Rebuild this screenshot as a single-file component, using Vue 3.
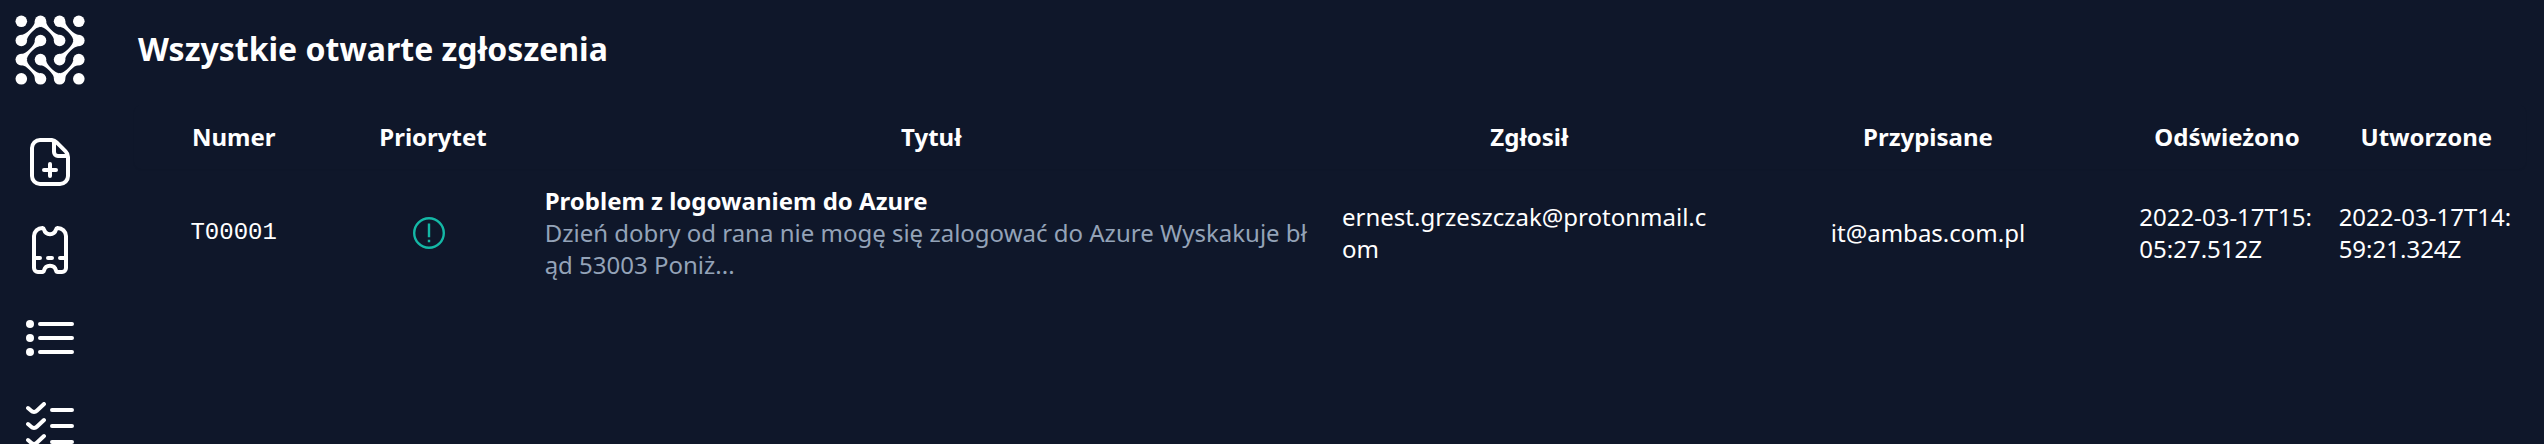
<script setup>
const columns = [
  { key: 'number', label: 'Numer', size: 'single' },
  { key: 'priority', label: 'Priorytet', size: 'single' },
  { key: 'title', label: 'Tytuł', size: 'wide' },
  { key: 'reporter', label: 'Zgłosił', size: 'double' },
  { key: 'assignee', label: 'Przypisane', size: 'double' },
  { key: 'updated', label: 'Odświeżono', size: 'single' },
  { key: 'created', label: 'Utworzone', size: 'single' }
]

const tickets = [
  {
    number: 'T00001',
    title: 'Problem z logowaniem do Azure',
    excerpt: 'Dzień dobry od rana nie mogę się zalogować do Azure Wyskakuje błąd 53003 Poniż...',
    reporter: 'ernest.grzeszczak@protonmail.com',
    assignee: 'it@ambas.com.pl',
    updated: '2022-03-17T15:05:27.512Z',
    created: '2022-03-17T14:59:21.324Z'
  }
]

// Logo: a 4x4 grid of dots, some neighbours joined by tapered diagonal links.
const steps = [6.3, 25.5, 44.6, 63.8]
const dots = steps.flatMap((y) => steps.map((x) => ({ x, y })))
const links = [
  [0, 1, 1, 0], [1, 0, 2, 1],
  [2, 0, 3, 1], [3, 1, 2, 2],
  [1, 1, 0, 2], [0, 2, 1, 3],
  [1, 2, 2, 3], [2, 3, 3, 2]
]

function linkPath([c1, r1, c2, r2]) {
  const x = steps[c1]
  const y = steps[r1]
  const dx = steps[c2] - x
  const dy = steps[r2] - y
  const length = Math.hypot(dx, dy)
  const ux = dx / length
  const uy = dy / length
  const at = (along, side) =>
    `${(x + ux * along - uy * side).toFixed(2)} ${(y + uy * along + ux * side).toFixed(2)}`
  const edge = 4.6
  const flare = 3.5
  const bend = 7
  const half = 1.5
  const mid = length / 2
  return [
    `M${at(edge, flare)}`,
    `Q${at(bend, half)} ${at(mid, half)}`,
    `Q${at(length - bend, half)} ${at(length - edge, flare)}`,
    `L${at(length - edge, -flare)}`,
    `Q${at(length - bend, -half)} ${at(mid, -half)}`,
    `Q${at(bend, -half)} ${at(edge, -flare)}Z`
  ].join('')
}

const linkPaths = links.map(linkPath)
</script>

<template>
  <div class="app">
    <nav class="sidebar">
      <a href="#" class="logo" aria-label="Strona główna">
        <svg viewBox="0 0 70 70" aria-hidden="true">
          <circle v-for="(d, i) in dots" :key="i" :cx="d.x" :cy="d.y" r="5.8" />
          <path v-for="p in linkPaths" :key="p" :d="p" />
        </svg>
      </a>
      <a href="#" class="item" aria-label="Nowe zgłoszenie">
        <svg viewBox="0 0 24 24" aria-hidden="true">
          <path d="M12 1H7A4 4 0 0 0 3 5V19A4 4 0 0 0 7 23H17A4 4 0 0 0 21 19V9.5A4 4 0 0 0 19.8 6.7L15.3 2.2A4 4 0 0 0 12 1ZM14 1.5V7A2 2 0 0 0 16 9H20.6M12 13V19M9 16H15" />
        </svg>
      </a>
      <a href="#" class="item" aria-label="Zgłoszenia">
        <svg viewBox="0 0 24 24" aria-hidden="true">
          <path d="M8.2 1A4.2 4.2 0 0 0 4 5V21A2 2 0 0 0 6 23H8A1 1 0 0 0 9 22.2A3.1 3.1 0 0 1 15 22.2A1 1 0 0 0 16 23H18A2 2 0 0 0 20 21V5A4.2 4.2 0 0 0 15.8 1A1 1 0 0 0 15 1.8A3.1 3.1 0 0 1 9 1.8A1 1 0 0 0 8.2 1ZM4 16H7M11 16H13M17 16H20" />
        </svg>
      </a>
      <a href="#" class="item" aria-label="Lista">
        <svg viewBox="0 0 24 24" aria-hidden="true">
          <path d="M7 5H23M7 12H23M7 19H23" />
          <circle cx="2" cy="5" r="2" />
          <circle cx="2" cy="12" r="2" />
          <circle cx="2" cy="19" r="2" />
        </svg>
      </a>
      <a href="#" class="item" aria-label="Zadania">
        <svg viewBox="0 0 24 24" aria-hidden="true">
          <path d="M13 4H23M13 12H23M13 20H23M1 3 2.6 4.4A2 2 0 0 0 5.4 4.4L9 1M1 11 2.6 12.4A2 2 0 0 0 5.4 12.4L9 9M1 19 2.6 20.4A2 2 0 0 0 5.4 20.4L9 17" />
        </svg>
      </a>
    </nav>

    <main class="content">
      <h1>Wszystkie otwarte zgłoszenia</h1>
      <table>
        <colgroup>
          <col v-for="c in columns" :key="c.key" :class="c.size" />
        </colgroup>
        <thead>
          <tr>
            <th v-for="c in columns" :key="c.key" scope="col">{{ c.label }}</th>
          </tr>
        </thead>
        <tbody>
          <tr v-for="t in tickets" :key="t.number">
            <td class="number">{{ t.number }}</td>
            <td class="priority">
              <svg viewBox="0 0 32 32" role="img" aria-label="Priorytet niski">
                <circle cx="16" cy="16" r="14.8" />
                <path d="M16 6.5V20.3M16 22.7V25.2" />
              </svg>
            </td>
            <td>
              <strong>{{ t.title }}</strong>
              <p>{{ t.excerpt }}</p>
            </td>
            <td>{{ t.reporter }}</td>
            <td class="assignee">{{ t.assignee }}</td>
            <td>{{ t.updated }}</td>
            <td>{{ t.created }}</td>
          </tr>
        </tbody>
      </table>
    </main>
  </div>
</template>

<style>
body {
  margin: 0;
  background: #0f172a;
}
</style>

<style scoped>
.app {
  display: flex;
  height: 100vh;
  overflow: hidden;
  background: #0f172a;
  color: #fff;
  font-family: "Noto Sans", sans-serif;
  font-size: 24px;
  line-height: 32px;
}

.sidebar {
  display: flex;
  flex: none;
  flex-direction: column;
  align-items: center;
  gap: 40px;
  width: 100px;
  padding-top: 15px;
  box-sizing: border-box;
}

.logo {
  flex: none;
  width: 70px;
  height: 70px;
  margin-bottom: 13px;
}

.item {
  flex: none;
  width: 48px;
  height: 48px;
}

svg {
  display: block;
  width: 100%;
  height: 100%;
}

.sidebar svg {
  fill: #fff;
}

.item path {
  fill: none;
  stroke: #fff;
  stroke-width: 2;
  stroke-linecap: round;
  stroke-linejoin: round;
}

.content {
  flex: 1;
  min-width: 0;
  padding: 25px 18px 0 34px;
}

h1 {
  margin: 0 4px 32px;
  font-size: 32px;
  line-height: 48px;
  font-weight: 700;
}

table {
  width: 100%;
  table-layout: fixed;
  border-collapse: collapse;
}

thead tr {
  border-radius: 8px;
  box-shadow: 0 1px 2px rgba(0, 0, 0, 0.05);
}

.single {
  width: 8.3333%;
}

.double {
  width: 16.6667%;
}

.wide {
  width: 33.3333%;
}

th {
  padding: 16px 12px;
  font-weight: 700;
  text-align: center;
}

td {
  padding: 16px 12px 0;
  vertical-align: middle;
  word-break: break-all;
}

.number {
  font-family: "Liberation Mono", monospace;
  text-align: center;
}

.priority {
  padding-right: 20px;
}

.priority svg {
  width: 32px;
  height: 32px;
  margin: 0 auto;
  fill: none;
  stroke: #14b8a6;
  stroke-width: 2.4;
}

strong {
  display: block;
  font-weight: 700;
}

p {
  margin: 0;
  color: #94a3b8;
}

.assignee {
  text-align: center;
}
</style>
